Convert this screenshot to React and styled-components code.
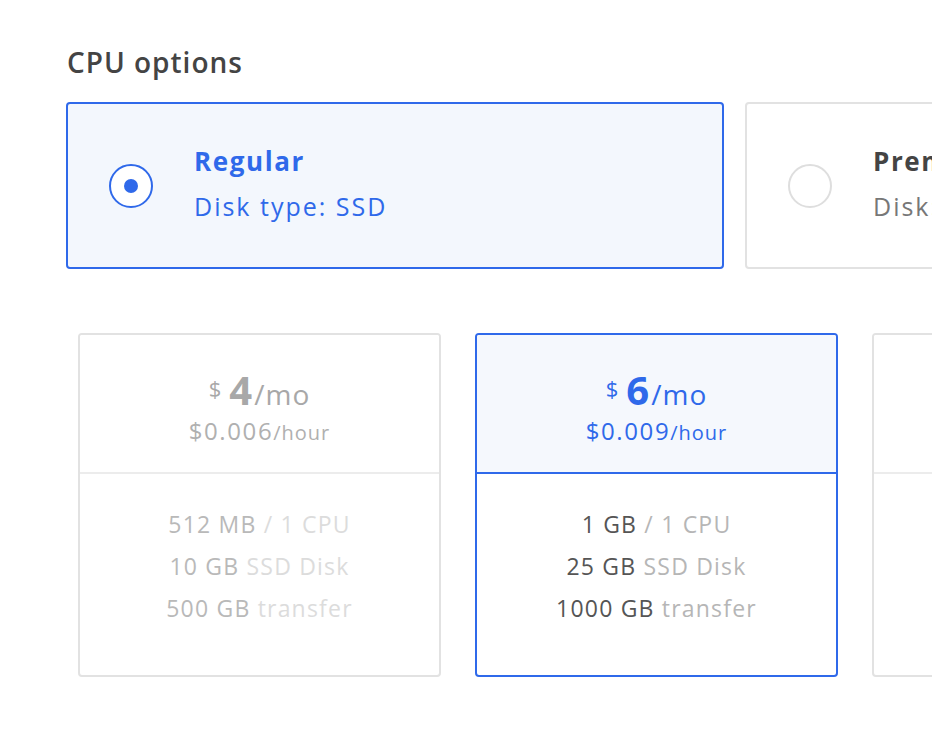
import styled, { createGlobalStyle } from "styled-components";

const GlobalStyle = createGlobalStyle`
  body {
    margin: 0;
    background: #fff;
    font-family: "Open Sans", "Lato", sans-serif;
  }
`;

const blue = "#2f69ea";

const options = [
  { title: "Regular", sub: "Disk type: SSD", selected: true },
  { title: "Premium Intel", sub: "Disk: NVMe SSD", selected: false },
];

const plans = [
  {
    price: "4",
    hour: "$0.006",
    specs: [
      ["512 MB", " / 1 CPU"],
      ["10 GB", " SSD Disk"],
      ["500 GB", " transfer"],
    ],
    state: "disabled",
  },
  {
    price: "6",
    hour: "$0.009",
    specs: [
      ["1 GB", " / 1 CPU"],
      ["25 GB", " SSD Disk"],
      ["1000 GB", " transfer"],
    ],
    state: "selected",
  },
  {
    price: "12",
    hour: "$0.018",
    specs: [
      ["2 GB", " / 1 CPU"],
      ["50 GB", " SSD Disk"],
      ["2 TB", " transfer"],
    ],
    state: "normal",
  },
];

const App = () => {
  return (
    <Page>
      <GlobalStyle />
      <Heading>CPU options</Heading>
      <OptionRow>
        {options.map((o) => (
          <Option key={o.title} selected={o.selected}>
            <Radio selected={o.selected} />
            <OptionText>
              <OptionTitle selected={o.selected}>{o.title}</OptionTitle>
              <OptionSub selected={o.selected}>{o.sub}</OptionSub>
            </OptionText>
          </Option>
        ))}
      </OptionRow>

      <PlanRow>
        {plans.map((p) => (
          <Plan key={p.price} state={p.state}>
            <PlanHead state={p.state}>
              <Price state={p.state}>
                <Dollar>$</Dollar>
                <Amount>{p.price}</Amount>
                <Per>/mo</Per>
              </Price>
              <Hourly state={p.state}>
                {p.hour}
                <small>/hour</small>
              </Hourly>
            </PlanHead>
            <PlanBody>
              {p.specs.map(([main, rest]) => (
                <Spec key={main} state={p.state}>
                  <strong>{main}</strong>
                  <span>{rest}</span>
                </Spec>
              ))}
            </PlanBody>
          </Plan>
        ))}
      </PlanRow>
    </Page>
  );
};

const Page = styled.div`
  width: 932px;
  height: 730px;
  overflow: hidden;
  padding: 44px 0 0 66px;
  box-sizing: border-box;
`;

const Heading = styled.h2`
  margin: 0 0 22px 1px;
  font-size: 28px;
  font-weight: 600;
  letter-spacing: 1px;
  color: #444;
  line-height: 36px;
`;

const OptionRow = styled.div`
  display: flex;
  gap: 21px;
`;

const Option = styled.div`
  flex: 0 0 658px;
  height: 167px;
  box-sizing: border-box;
  display: flex;
  align-items: center;
  padding-left: 41px;
  border-radius: 4px;
  border: 2px solid ${(p) => (p.selected ? blue : "#e2e2e2")};
  background: ${(p) => (p.selected ? "#f3f7fd" : "#fff")};
`;

const Radio = styled.span`
  width: 44px;
  height: 44px;
  box-sizing: border-box;
  border-radius: 50%;
  border: 2px solid ${(p) => (p.selected ? blue : "#dedede")};
  background: #fff;
  display: flex;
  align-items: center;
  justify-content: center;
  margin-right: 41px;
  &::after {
    content: "";
    display: ${(p) => (p.selected ? "block" : "none")};
    width: 14px;
    height: 14px;
    border-radius: 50%;
    background: ${blue};
  }
`;

const OptionText = styled.div`
  display: flex;
  flex-direction: column;
  gap: 13px;
  margin-top: -4px;
`;

const OptionTitle = styled.div`
  font-size: 26px;
  line-height: 32px;
  font-weight: 700;
  letter-spacing: 1.6px;
  color: ${(p) => (p.selected ? blue : "#444")};
  white-space: nowrap;
`;

const OptionSub = styled.div`
  font-size: 25px;
  line-height: 32px;
  letter-spacing: 2px;
  color: ${(p) => (p.selected ? blue : "#777")};
  white-space: nowrap;
`;

const PlanRow = styled.div`
  display: flex;
  gap: 34px;
  margin: 64px 0 0 12px;
`;

const Plan = styled.div`
  flex: 0 0 363px;
  height: 344px;
  box-sizing: border-box;
  border-radius: 4px;
  border: 2px solid ${(p) => (p.state === "selected" ? blue : "#e2e2e2")};
  display: flex;
  flex-direction: column;
  overflow: hidden;
`;

const PlanHead = styled.div`
  height: 139px;
  box-sizing: border-box;
  display: flex;
  flex-direction: column;
  align-items: center;
  justify-content: center;
  padding-top: 8px;
  border-bottom: 2px solid
    ${(p) => (p.state === "selected" ? blue : "#ececec")};
  background: ${(p) => (p.state === "selected" ? "#f5f8fd" : "#fff")};
`;

const Price = styled.div`
  display: flex;
  align-items: baseline;
  color: ${(p) =>
    p.state === "selected" ? blue : p.state === "disabled" ? "#a8a8a8" : "#444"};
  line-height: 44px;
`;

const Dollar = styled.span`
  font-size: 22px;
  align-self: flex-start;
  margin-top: -2px;
  margin-right: 8px;
`;

const Amount = styled.span`
  font-size: 40px;
  font-weight: 700;
  letter-spacing: 1px;
`;

const Per = styled.span`
  font-size: 28px;
  letter-spacing: 1px;
  margin-left: 1px;
`;

const Hourly = styled.div`
  font-size: 24px;
  line-height: 30px;
  letter-spacing: 1.6px;
  color: ${(p) =>
    p.state === "selected" ? blue : p.state === "disabled" ? "#b0b0b0" : "#777"};
  small {
    font-size: 20px;
    letter-spacing: 1px;
  }
`;

const PlanBody = styled.div`
  flex: 1;
  display: flex;
  flex-direction: column;
  align-items: center;
  padding-top: 35px;
  gap: 12px;
`;

const Spec = styled.div`
  font-size: 23px;
  line-height: 30px;
  letter-spacing: 1.2px;
  white-space: nowrap;
  strong {
    font-weight: 400;
    color: ${(p) => (p.state === "disabled" ? "#b9b9b9" : "#555")};
  }
  span {
    color: ${(p) => (p.state === "disabled" ? "#dcdcdc" : "#b6b6b6")};
  }
`;

export default App;
